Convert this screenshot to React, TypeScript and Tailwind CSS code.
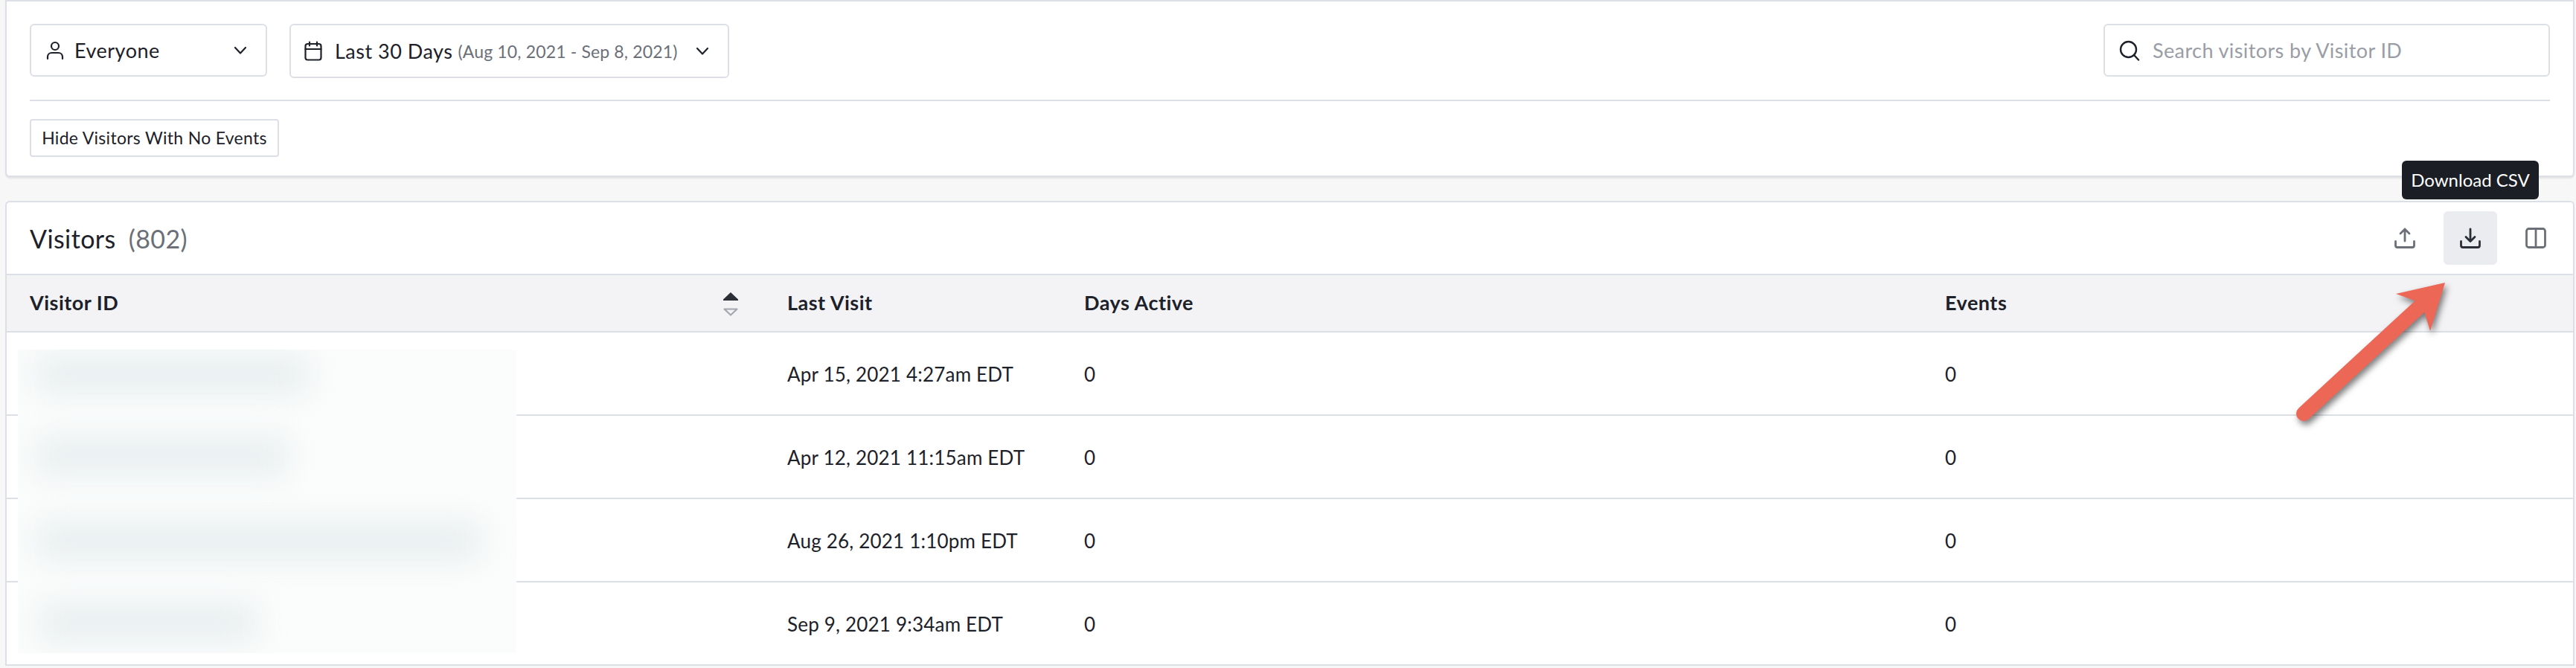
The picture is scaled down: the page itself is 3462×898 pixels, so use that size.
import React from 'react';

const rows = [
  { lastVisit: 'Apr 15, 2021 4:27am EDT' },
  { lastVisit: 'Apr 12, 2021 11:15am EDT' },
  { lastVisit: 'Aug 26, 2021 1:10pm EDT' },
  { lastVisit: 'Sep 9, 2021 9:34am EDT' },
];

const gridCols = 'grid grid-cols-[1049px_399px_1157px_1fr]';

const Chevron: React.FC = () => (
  <svg width="18" height="12" viewBox="0 0 18 12" fill="none" stroke="#1d2129" strokeWidth="2.2" strokeLinecap="round" strokeLinejoin="round">
    <path d="M2 2l7 7.5L16 2" />
  </svg>
);

const PersonIcon: React.FC = () => (
  <svg width="24" height="26" viewBox="0 0 24 26" fill="none" stroke="#1d2129" strokeWidth="2.2" strokeLinecap="round">
    <circle cx="12" cy="7" r="5" />
    <path d="M2 24v-2.5c0-3.5 2.5-5.500 5.500-5.500h9c3 0 5.500 2 5.500 5.500V24" />
  </svg>
);

const CalendarIcon: React.FC = () => (
  <svg width="24" height="27" viewBox="0 0 24 27" fill="none" stroke="#1d2129" strokeWidth="2.2" strokeLinecap="round">
    <rect x="1.500" y="4" width="21" height="21.500" rx="3" />
    <path d="M1.500 11h21M7 1.500v5M17 1.500v5" />
  </svg>
);

const SearchIcon: React.FC = () => (
  <svg width="28" height="28" viewBox="0 0 28 28" fill="none" stroke="#1d2129" strokeWidth="2.400" strokeLinecap="round">
    <circle cx="12.500" cy="12.500" r="10.500" />
    <path d="M20 20l6 6.500" />
  </svg>
);

const UploadIcon: React.FC<{ color: string }> = ({ color }) => (
  <svg width="28" height="28" viewBox="0 0 28 28" fill="none" stroke={color} strokeWidth="2.800" strokeLinecap="round" strokeLinejoin="round">
    <path d="M14 18V2M8 8l6-6 6 6" />
    <path d="M1.500 18.500v5.500c0 1.400 1.100 2.500 2.500 2.500h20c1.400 0 2.500-1.100 2.500-2.500v-5.500" />
  </svg>
);

const DownloadIcon: React.FC<{ color: string }> = ({ color }) => (
  <svg width="28" height="28" viewBox="0 0 28 28" fill="none" stroke={color} strokeWidth="2.800" strokeLinecap="round" strokeLinejoin="round">
    <path d="M14 2v16M8 12.500l6 6 6-6" />
    <path d="M1.500 18.500v5.500c0 1.400 1.100 2.500 2.500 2.500h20c1.400 0 2.500-1.100 2.500-2.500v-5.500" />
  </svg>
);

const ColumnsIcon: React.FC = () => (
  <svg width="28" height="28" viewBox="0 0 28 28" fill="none" stroke="#6b6f78" strokeWidth="2.800" strokeLinejoin="round">
    <rect x="1.500" y="1.500" width="25" height="25" rx="3" />
    <path d="M14 1.500v25" />
  </svg>
);

const SortIcon: React.FC = () => (
  <svg width="20" height="32" viewBox="0 0 20 32" className="mt-[2px]">
    <path d="M10 0L20 9.500V11H0V9.500z" fill="#2b2e36" />
    <path d="M1.500 22.500h17L10 30.500z" fill="none" stroke="#a3a6ad" strokeWidth="2.200" strokeLinejoin="round" />
  </svg>
);

export default function App() {
  return (
    <div className="relative h-[898px] w-full overflow-hidden bg-[#f7f7f7] pl-[7px] pr-[2px] font-['Lato',sans-serif] text-[#1d2129]">
      {/* Filters */}
      <div className="h-[238px] rounded-b-[6px] border-2 border-[#dcdfe5] bg-white px-[31px] pt-[30px] shadow-[0_2px_2px_rgba(0,0,0,0.08)]">
        <div className="flex items-start justify-between">
          <div className="flex items-start gap-[30px]">
            <button className="flex h-[71px] w-[319px] items-center rounded-[6px] border-2 border-[#dcdfe5] pl-[20px] pr-[25px] text-[27px] tracking-[0.5px]">
              <PersonIcon />
              <span className="ml-[14px] pt-[2px]">Everyone</span>
              <span className="ml-auto"><Chevron /></span>
            </button>
            <button className="flex h-[73px] w-[591px] items-center rounded-[6px] border-2 border-[#dcdfe5] pl-[18px] pr-[25px] text-[27px] tracking-[0.5px]">
              <CalendarIcon />
              <span className="ml-[17px] pt-[2px]">Last 30 Days</span>
              <span className="ml-[7px] pt-[2px] text-[23px] tracking-[0.15px] text-[#6b6f78]">(Aug 10, 2021 - Sep 8, 2021)</span>
              <span className="ml-auto"><Chevron /></span>
            </button>
          </div>
          <div className="flex h-[71px] w-[600px] items-center rounded-[6px] border-2 border-[#dcdfe5] pl-[19px] text-[27px] tracking-[0.4px] text-[#9a9da5]">
            <SearchIcon />
            <span className="ml-[17px] pt-[2px]">Search visitors by Visitor ID</span>
          </div>
        </div>
        <div className="mt-[29px] h-[2px] bg-[#dcdfe5]" />
        <button className="mt-[24px] flex h-[51px] w-[335px] items-center justify-center rounded-[4px] border-2 border-[#dcdfe5] text-[23px] tracking-[0.3px]">
          Hide Visitors With No Events
        </button>
      </div>

      {/* Visitors table */}
      <div className="mt-[32px] rounded-t-[6px] border-x-2 border-t-2 border-[#dcdfe5] bg-white">
        <div className="flex h-[98px] items-center justify-between border-b-2 border-[#dcdfe5] pl-[31px] pr-[36px]">
          <div className="text-[34px] tracking-[0.4px]">
            Visitors <span className="ml-[8px] text-[#6b6f78]">(802)</span>
          </div>
          <div className="flex items-center">
            <div className="mr-[38px]"><UploadIcon color="#6b6f78" /></div>
            <div className="flex h-[72px] w-[72px] items-center justify-center rounded-[6px] bg-[#ebecf0]">
              <DownloadIcon color="#2b2e36" />
            </div>
            <div className="ml-[38px]"><ColumnsIcon /></div>
          </div>
        </div>

        <div className={`${gridCols} h-[77px] items-center border-b-2 border-[#dcdfe5] bg-[#f3f3f6] text-[27px] font-bold tracking-[0.5px]`}>
          <div className="flex items-center justify-between pl-[31px] pr-[66px]">
            <span>Visitor ID</span>
            <SortIcon />
          </div>
          <div>Last Visit</div>
          <div>Days Active</div>
          <div>Events</div>
        </div>

        {rows.map((row) => (
          <div key={row.lastVisit} className={`${gridCols} h-[112px] items-center border-b-2 border-[#dcdfe5] pt-[2px] text-[26px] tracking-[0.2px]`}>
            <div />
            <div>{row.lastVisit}</div>
            <div>0</div>
            <div>0</div>
          </div>
        ))}
      </div>

      {/* Blurred visitor IDs */}
      <div className="absolute left-[24px] top-[470px] h-[408px] w-[670px] overflow-hidden bg-[#fbfcfc]">
        <div className="absolute left-[25px] top-[8px] h-[50px] w-[365px] bg-[#e8eeef] blur-[20px]" />
        <div className="absolute left-[25px] top-[118px] h-[50px] w-[337px] bg-[#e8eeef] blur-[20px]" />
        <div className="absolute left-[25px] top-[232px] h-[50px] w-[596px] bg-[#e8eeef] blur-[20px]" />
        <div className="absolute left-[30px] top-[342px] h-[50px] w-[290px] bg-[#e8eeef] blur-[20px]" />
      </div>

      {/* Tooltip */}
      <div className="absolute left-[3228px] top-[216px] flex h-[52px] w-[184px] items-center justify-center rounded-[6px] bg-[#1b1e25] text-[24px] text-white">
        Download CSV
      </div>

      {/* Annotation arrow */}
      <svg className="absolute left-[3080px] top-[370px] drop-shadow-[3px_5px_4px_rgba(0,0,0,0.5)]" width="220" height="200" viewBox="0 0 220 200">
        <path d="M16 186L172 42" stroke="#ec6756" strokeWidth="20" strokeLinecap="round" fill="none" />
        <polygon points="206,10 140,25 165,34 178,49 186,75" fill="#ec6756" />
      </svg>
    </div>
  );
}
